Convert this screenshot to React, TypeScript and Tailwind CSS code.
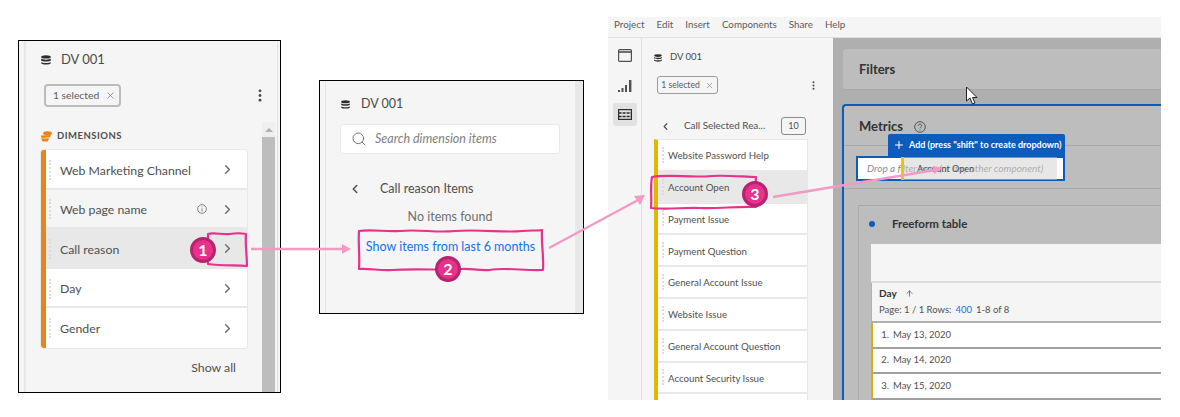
import React from "react";
import { ChevronRight, ChevronLeft, X, Search, Plus, ArrowUp } from "lucide-react";

const Db = ({ cls }: { cls: string }) => (
  <svg viewBox="0 0 10 10" className={cls} fill="#2c2c2c">
    <ellipse cx="5" cy="1.9" rx="4.8" ry="1.7" />
    <path d="M.2 3.6C1 5 9 5 9.8 3.6V5.4C9 6.8 1 6.8.2 5.4Z" />
    <path d="M.2 6.9C1 8.3 9 8.3 9.8 6.9V8.2C9 10 1 10 .2 8.2Z" />
  </svg>
);

const Kebab = ({ cls }: { cls: string }) => (
  <svg viewBox="0 0 4 14" className={cls} fill="#4b4b4b">
    <circle cx="2" cy="2" r="1.5" />
    <circle cx="2" cy="7" r="1.5" />
    <circle cx="2" cy="12" r="1.5" />
  </svg>
);

const Dots = ({ cls }: { cls: string }) => (
  <div className={`w-[2px] border-l-2 border-dotted border-[#dcdcdc] ${cls}`} />
);

const Chip = ({ big }: { big?: boolean }) => (
  <div
    className={
      big
        ? "flex h-[23px] w-[77px] items-center gap-[6px] rounded-[4px] border-2 border-[#bcbcbc] pl-[7px] text-[10.3px] text-[#5c5c5c]"
        : "flex h-[18px] w-[61px] items-center justify-center gap-[5px] rounded-[3px] border border-[#9a9a9a] pt-[1px] text-[8.6px] text-[#5c5c5c]"
    }
  >
    <span>1 selected</span>
    <X size={big ? 11 : 9} strokeWidth={1.5} color="#707070" />
  </div>
);

const DimRow = ({ label, bg, info }: { label: string; bg: string; info?: boolean }) => (
  <div className={`flex h-[39.6px] items-center border-b-2 border-[#e8e8e8] pr-[12px] pt-[2px] last:border-b-0 last:pt-0 ${bg}`}>
    <Dots cls="ml-[3px] h-[20px]" />
    <span className="ml-[9px] mt-[2px] flex-1 text-[12.3px] text-[#505050]">{label}</span>
    {info && (
      <svg viewBox="0 0 12 12" className="mr-[13px] h-[10px] w-[10px]" fill="none" stroke="#707070" strokeWidth="1">
        <circle cx="6" cy="6" r="5.2" />
        <path d="M6 5.2V9M6 3V4" />
      </svg>
    )}
    <ChevronRight size={15} strokeWidth={2.4} color="#6e6e6e" />
  </div>
);

const ListRow = ({ label, bg }: { label: string; bg: string }) => (
  <div className={`flex h-[31.8px] shrink-0 items-center border-b-2 border-[#e8e8e8] ${bg}`}>
    <Dots cls="ml-[4px] h-[16px]" />
    <span className="ml-[4px] mt-[1px] text-[9.7px] text-[#505050]">{label}</span>
  </div>
);

const TableRow = ({ n, date }: { n: string; date: string }) => (
  <div className="flex h-[25.7px] shrink-0 items-center border-b-2 border-l-[2px] border-b-[#a0a0a0] border-l-[#d8b400] bg-white text-[9.5px] text-[#505050]">
    <span className="w-[16px] text-right">{n}</span>
    <span className="ml-[4px]">{date}</span>
  </div>
);

const Badge = ({ n, cls }: { n: string; cls: string }) => (
  <div
    className={`absolute flex h-[26px] w-[26px] items-center justify-center rounded-full border-[3px] border-[#b5256f] bg-[#e8318a] text-[16px] font-bold text-white ${cls}`}
  >
    {n}
  </div>
);

export default function App() {
  return (
    <div className="relative h-[417px] w-[1180px] overflow-hidden bg-white font-['Lato','Noto_Sans',sans-serif]">
      <div className="flex items-start pt-[17px]">
        {/* Panel 1 */}
        <div className="ml-[18px] mt-[23px] flex h-[353px] w-[263px] shrink-0 border border-black bg-[#f5f5f5]">
          <div className="w-[7px] shrink-0 border-r-2 border-[#e8e8e8]" />
          <div className="flex flex-1 flex-col">
            <div className="ml-[15px] mt-[13px] flex h-[11px] items-center">
              <Db cls="h-[10px] w-[10px]" />
              <span className="ml-[10px] text-[13px] text-[#4b4b4b]">DV 001</span>
            </div>
            <div className="ml-[18px] mr-[15px] mt-[19px] flex items-center justify-between">
              <Chip big />
              <Kebab cls="h-[13px] w-[4px]" />
            </div>
            <div className="flex flex-1">
              <div className="flex flex-1 flex-col">
                <div className="ml-[15px] mt-[23px] flex h-[12px] items-center">
                  <svg viewBox="0 0 11 11" className="h-[11px] w-[11px]" fill="#e68619">
                    <ellipse cx="6.5" cy="2.3" rx="4.5" ry="2" />
                    <path d="M0 4.5L10 4 9 6.2 1 7 0 5.8ZM0 7.6L8 7.2 7 10.5 1.5 10.5Z" />
                  </svg>
                  <span className="ml-[5px] text-[9.5px] font-bold tracking-[0.5px] text-[#505050]">DIMENSIONS</span>
                </div>
                <div className="ml-[15px] mr-[15px] mt-[8px] overflow-hidden rounded-[3px] border-l-[5px] border-[#e68619] shadow-[0_0_0_1px_#e8e8e8]">
                  <DimRow label="Web Marketing Channel" bg="bg-white" />
                  <DimRow label="Web page name" bg="bg-[#f5f5f5]" info />
                  <DimRow label="Call reason" bg="bg-[#e8e8e8]" />
                  <DimRow label="Day" bg="bg-white" />
                  <DimRow label="Gender" bg="bg-white" />
                </div>
                <div className="mr-[26px] mt-[11px] text-right text-[12.3px] text-[#505050]">Show all</div>
              </div>
              <div className="mt-[15px] flex w-[13px] shrink-0 flex-col">
                <div className="flex h-[15px] items-center justify-center bg-[#efefef]">
                  <div className="h-0 w-0 border-x-[4px] border-b-[4px] border-x-transparent border-b-[#b0b0b0]" />
                </div>
                <div className="flex-1 bg-[#bdbdbd]" />
              </div>
              <div className="w-[2px] shrink-0" />
            </div>
          </div>
          <div className="w-[3px] shrink-0 border-l border-[#e0e0e0]" />
        </div>

        {/* Panel 2 */}
        <div className="ml-[38px] mt-[63px] flex h-[234px] w-[265px] shrink-0 border border-black bg-[#f5f5f5]">
          <div className="w-[6px] shrink-0 border-r border-[#e4e4e4]" />
          <div className="flex flex-1 flex-col">
            <div className="ml-[15px] mt-[18px] flex h-[10px] items-center">
              <Db cls="h-[9px] w-[9px]" />
              <span className="ml-[11px] text-[12.5px] text-[#4b4b4b]">DV 001</span>
            </div>
            <div className="ml-[14px] mr-[15px] mt-[15px] flex h-[30px] items-center rounded-[3px] border border-[#eaeaea] bg-white pl-[10px]">
              <Search size={16} strokeWidth={1.4} color="#6e6e6e" />
              <span className="ml-[8px] mt-[1px] text-[12.5px] italic text-[#808080]">Search dimension items</span>
            </div>
            <div className="ml-[22px] mt-[27px] flex h-[16px] items-center">
              <ChevronLeft size={14} strokeWidth={2.6} color="#505050" />
              <span className="ml-[18px] text-[12.5px] text-[#505050]">Call reason Items</span>
            </div>
            <div className="mt-[12px] pr-[1px] text-center text-[12.5px] leading-[16px] text-[#6e6e6e]">No items found</div>
            <div className="mt-[14px] text-center text-[12.5px] leading-[16px] text-[#1473e6]">Show items from last 6 months</div>
          </div>
          <div className="w-[8px] shrink-0 bg-[#e8e8e8]" />
        </div>

        {/* Panel 3 */}
        <div className="ml-[24px] flex h-[383px] w-[553px] shrink-0 flex-col overflow-hidden bg-[#f5f5f5]">
          <div className="flex h-[21px] shrink-0 items-center border-b border-[#e0e0e0] pb-[5px] pl-[6px] text-[9.8px] text-[#5c5c5c]">
            <span>Project</span>
            <span className="ml-[12px]">Edit</span>
            <span className="ml-[12px]">Insert</span>
            <span className="ml-[12px]">Components</span>
            <span className="ml-[12px]">Share</span>
            <span className="ml-[12px]">Help</span>
          </div>
          <div className="flex min-h-0 flex-1">
            {/* Rail */}
            <div className="flex w-[34px] shrink-0 flex-col items-center border-r border-[#e0e0e0] pt-[11px]">
              <svg viewBox="0 0 14 13" className="h-[13px] w-[14px]" fill="none" stroke="#505050" strokeWidth="1.2">
                <rect x=".6" y=".6" width="12.8" height="11.8" rx="1" />
                <path d="M.6 3H13.4" strokeWidth="1.6" />
              </svg>
              <svg viewBox="0 0 14 13" className="mt-[17px] h-[13px] w-[14px]" fill="#505050">
                <rect x="0" y="11" width="2" height="2" />
                <rect x="3.5" y="9" width="2" height="4" />
                <rect x="7" y="6" width="2" height="7" />
                <rect x="11" y="1" width="2.4" height="12" />
              </svg>
              <div className="mt-[11px] flex h-[23px] w-[24px] items-center justify-center rounded-[3px] bg-[#e1e1e1]">
                <svg viewBox="0 0 14 11" className="h-[11px] w-[14px]" fill="none" stroke="#2c2c2c" strokeWidth="1.2">
                  <rect x=".6" y=".6" width="12.8" height="9.8" />
                  <path d="M.6 4H13.4M.6 7.5H13.4" strokeWidth="1.6" strokeDasharray="3 1" />
                </svg>
              </div>
            </div>
            {/* Component panel */}
            <div className="flex w-[191px] shrink-0 flex-col">
              <div className="ml-[12px] mt-[14px] flex h-[11px] items-center">
                <Db cls="h-[8px] w-[8px]" />
                <span className="ml-[8px] text-[9.5px] text-[#4b4b4b]">DV 001</span>
              </div>
              <div className="ml-[15px] mr-[18px] mt-[13px] flex items-center justify-between">
                <Chip />
                <Kebab cls="h-[9px] w-[3px]" />
              </div>
              <div className="ml-[18px] mr-[27px] mt-[23px] flex h-[18px] items-center">
                <ChevronLeft size={11} strokeWidth={2.6} color="#505050" />
                <span className="ml-[13px] -mt-[2px] flex-1 text-[9.9px] text-[#505050]">Call Selected Rea...</span>
                <div className="flex h-[18px] w-[25px] items-center justify-center rounded-[3px] border border-[#8a8a8a] text-[9px] text-[#505050]">10</div>
              </div>
              <div className="ml-[12px] mr-[25px] mt-[4px] flex min-h-0 flex-1 flex-col overflow-hidden border-l-[4px] border-r border-t border-[#e8e8e8] border-l-[#e0b800]">
                <ListRow label="Website Password Help" bg="bg-white" />
                <ListRow label="Account Open" bg="bg-[#e8e8e8]" />
                <ListRow label="Payment Issue" bg="bg-white" />
                <ListRow label="Payment Question" bg="bg-white" />
                <ListRow label="General Account Issue" bg="bg-white" />
                <ListRow label="Website Issue" bg="bg-white" />
                <ListRow label="General Account Question" bg="bg-white" />
                <ListRow label="Account Security Issue" bg="bg-white" />
                <ListRow label="" bg="bg-white" />
              </div>
            </div>
            {/* Workspace */}
            <div className="flex min-w-0 flex-1 flex-col border-l-[9px] border-[#afafaf] bg-[#afafaf]">
              <div className="ml-[1px] mt-[11px] flex h-[41px] shrink-0 items-center rounded-l-[3px] border-b border-[#a8a8a8] bg-[#bdbdbd] pl-[16px] pt-[2px] text-[13px] font-bold text-[#333]">Filters</div>
              <div className="mt-[14px] flex min-h-0 flex-1 flex-col rounded-tl-[4px] border-l-2 border-t-2 border-[#0d5cbb] bg-[#bdbdbd]">
                <div className="flex h-[40px] shrink-0 items-center border-b border-[#a8a8a8] pl-[15px] pt-[2px]">
                  <span className="text-[13px] font-bold text-[#333]">Metrics</span>
                  <svg viewBox="0 0 14 14" className="ml-[11px] h-[12px] w-[12px]" fill="none" stroke="#444" strokeWidth="1">
                    <circle cx="7" cy="7" r="6.2" />
                    <path d="M5 5.5C5 3 9.2 3.2 9 5.6 8.8 7 7 6.8 7 8.6M7 10V11" />
                  </svg>
                </div>
                <div className="h-[43px] shrink-0 border-b border-[#a8a8a8]" />
                <div className="ml-[14px] mt-[16px] flex min-h-0 flex-1 flex-col border-l border-t border-[#a8a8a8]">
                  <div className="flex h-[36px] shrink-0 items-center pl-[10px]">
                    <span className="h-[6px] w-[6px] rounded-full bg-[#0d5cbb]" />
                    <span className="ml-[17px] text-[11.5px] font-bold text-[#333]">Freeform table</span>
                  </div>
                  <div className="ml-[12px] mt-[2px] flex min-h-0 flex-1 flex-col bg-[#f5f5f5]">
                    <div className="h-[39px] shrink-0 border-b-2 border-[#dcdcdc]" />
                    <div className="flex h-[40px] shrink-0 flex-col justify-center border-b-2 border-l border-[#b0b0b0] pl-[7px] text-[#505050]">
                      <div className="flex items-center text-[10px] font-bold text-[#333]">
                        Day
                        <ArrowUp size={9} strokeWidth={2} color="#505050" className="ml-[8px]" />
                      </div>
                      <div className="mt-[2px] text-[9.5px]">
                        Page: 1 / 1 Rows:
                        <span className="ml-[4px] text-[#1473e6]">400</span>
                        <span className="ml-[4px]">1-8 of 8</span>
                      </div>
                    </div>
                    <TableRow n="1." date="May 13, 2020" />
                    <TableRow n="2." date="May 14, 2020" />
                    <TableRow n="3." date="May 15, 2020" />
                    <TableRow n="" date="" />
                  </div>
                </div>
              </div>
            </div>
          </div>
        </div>
      </div>

      {/* Drop zone overlay */}
      <div className="absolute left-[856px] top-[156px] flex h-[25px] w-[209px] items-center border-2 border-[#0d5cbb] bg-white pl-[9px] text-[10px] italic text-[#8a8a8a]">
        Drop a filter here (or any other component)
      </div>
      <div className="absolute left-[888px] top-[134px] flex h-[22px] w-[177px] items-center rounded-t-[2px] bg-[#0d5cbb] pl-[5px] text-[9px] font-bold text-white">
        <Plus size={12} strokeWidth={2} color="#fff" />
        <span className="ml-[4px] whitespace-nowrap">Add (press "shift" to create dropdown)</span>
      </div>
      <div className="absolute left-[901px] top-[157px] flex h-[23px] w-[156px] items-center border-l-[3px] border-[#e8c800] bg-[#d0d0d0]/50 pl-[13px] text-[9px] text-[#505050]">
        Account Open
      </div>

      {/* Annotations */}
      <svg className="absolute left-0 top-0 h-[417px] w-[1180px]" viewBox="0 0 1180 417" fill="none">
        <g stroke="#f29ac4" strokeWidth="2.4">
          <path d="M251 249H344" />
          <path d="M549 248L640 199" />
          <path d="M773 197L935 170" />
        </g>
        <g fill="#f29ac4">
          <path d="M351 249L342 244V254Z" />
          <path d="M645 195L634 196 640 205Z" />
          <path d="M943 168L933 166 934 174Z" />
        </g>
        <g stroke="#e8318a" strokeWidth="2.2" strokeLinejoin="round">
          <path d="M208 234C214 232 222 235 230 234 236 233 241 233 246 234 245 244 247 256 247 266 236 265 222 266 208 264Z" />
          <path d="M359 231C372 229 385 232 400 231 420 229 435 233 455 231 480 229 505 233 522 231 530 230 537 231 542 230 541 243 544 256 543 270 525 271 505 267 490 270 478 271 470 268 461 269 445 271 420 268 392 270 380 271 370 268 359 269 360 256 358 243 359 231Z" />
          <path d="M652 177C670 174 690 178 712 176 728 175 745 177 756 177 755 187 757 197 756 207 735 206 720 209 700 208 685 207 668 210 651 208 652 198 650 187 652 177Z" />
        </g>
        <path d="M966.5 87V101L970 98 972.5 104 975 103 972.5 97.5H977Z" fill="#fff" stroke="#222" strokeWidth="1" />
      </svg>
      <Badge n="1" cls="left-[190px] top-[237px]" />
      <Badge n="2" cls="left-[435px] top-[256px]" />
      <Badge n="3" cls="left-[742px] top-[181px]" />
    </div>
  );
}
